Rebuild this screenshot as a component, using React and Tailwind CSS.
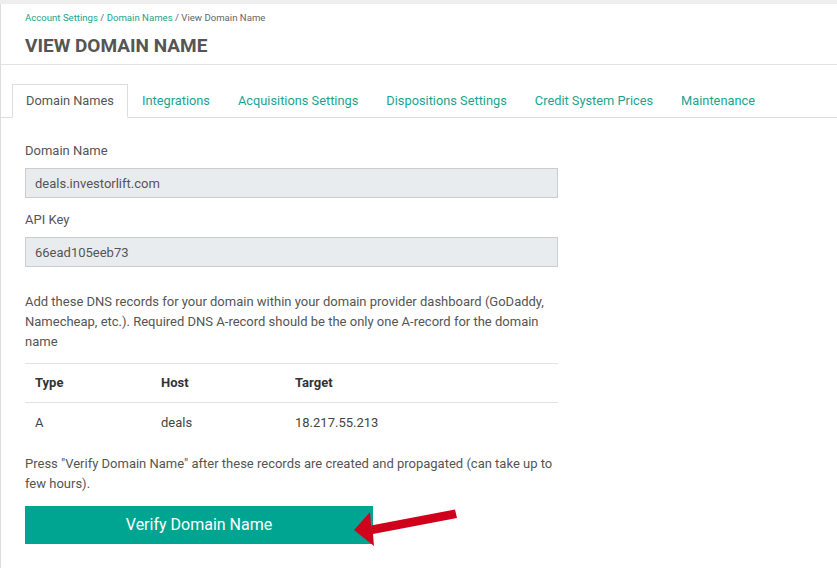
import React from "react";

const tabs = [
  "Domain Names",
  "Integrations",
  "Acquisitions Settings",
  "Dispositions Settings",
  "Credit System Prices",
  "Maintenance",
];

const records = [{ type: "A", host: "deals", target: "18.217.55.213" }];

function Field({ label, value }) {
  return (
    <div className="flex flex-col">
      <label className="text-[13px] leading-[20px] text-[#555]">{label}</label>
      <input
        readOnly
        value={value}
        className="mt-[7px] h-[30px] w-[533px] border border-[#ccc] bg-[#e9ecef] px-[9px] text-[13px] text-[#555] outline-none"
      />
    </div>
  );
}

export default function App() {
  return (
    <div
      className="relative min-h-screen bg-[#eeeeee] pt-[4px]"
      style={{ fontFamily: "Roboto, 'Liberation Sans', sans-serif" }}
    >
      <div className="min-h-[564px] border-l border-[#dddddd] bg-white">
        {/* header */}
        <div className="border-b border-[#e3e3e3] pl-[24px] pt-[7px] pb-[6px]">
          <div className="text-[9.6px] leading-[14px] text-[#666]">
            <a className="text-[#1aa48f]">Account Settings</a> /{" "}
            <a className="text-[#1aa48f]">Domain Names</a> / View Domain Name
          </div>
          <h1 className="mt-[9px] text-[19px] font-bold leading-[24px] text-[#555]">
            VIEW DOMAIN NAME
          </h1>
        </div>

        {/* tabs */}
        <div className="mt-[19px] flex border-b border-[#dddddd] pl-[11px]">
          {tabs.map((t, i) => (
            <div
              key={t}
              className={
                i === 0
                  ? "-mb-px flex h-[34px] items-center border border-[#dddddd] border-b-white bg-white px-[13px] text-[12.8px] text-[#555]"
                  : "-mb-px flex h-[34px] items-center border border-transparent px-[13px] text-[12.8px] text-[#1aa48f]"
              }
            >
              {t}
            </div>
          ))}
        </div>

        {/* content */}
        <div className="pl-[24px] pt-[23px]">
          <Field label="Domain Name" value="deals.investorlift.com" />
          <div className="mt-[12px]">
            <Field label="API Key" value="66ead105eeb73" />
          </div>

          <p className="mt-[25px] w-[533px] text-[13px] leading-[20px] text-[#555]">
            Add these DNS records for your domain within your domain provider
            dashboard (GoDaddy, Namecheap, etc.). Required DNS A-record should be
            the only one A-record for the domain name
          </p>

          <div className="mt-[11px] w-[533px] text-[13px] text-[#333]">
            <div className="grid h-[40px] grid-cols-[126px_134px_1fr] items-center border-t border-b border-[#e3e3e3] px-[10px] font-bold">
              <div>Type</div>
              <div>Host</div>
              <div>Target</div>
            </div>
            {records.map((r) => (
              <div
                key={r.host}
                className="grid h-[40px] grid-cols-[126px_134px_1fr] items-center px-[10px] text-[#444]"
              >
                <div>{r.type}</div>
                <div>{r.host}</div>
                <div>{r.target}</div>
              </div>
            ))}
          </div>

          <p className="mt-[11px] w-[533px] text-[13px] leading-[20px] text-[#555]">
            Press "Verify Domain Name" after these records are created and
            propagated (can take up to few hours).
          </p>

          <button className="mt-[12px] flex h-[38px] w-[348px] items-center justify-center bg-[#00a591] text-[16px] text-white">
            Verify Domain Name
          </button>
        </div>
      </div>

      <svg
        className="pointer-events-none absolute left-0 top-0"
        width="837"
        height="568"
        viewBox="0 0 837 568"
      >
        <polygon
          points="354,530 370,512 371,525.5 455,509.5 457,518 373,534 374,546"
          fill="#d0021b"
        />
      </svg>
    </div>
  );
}
